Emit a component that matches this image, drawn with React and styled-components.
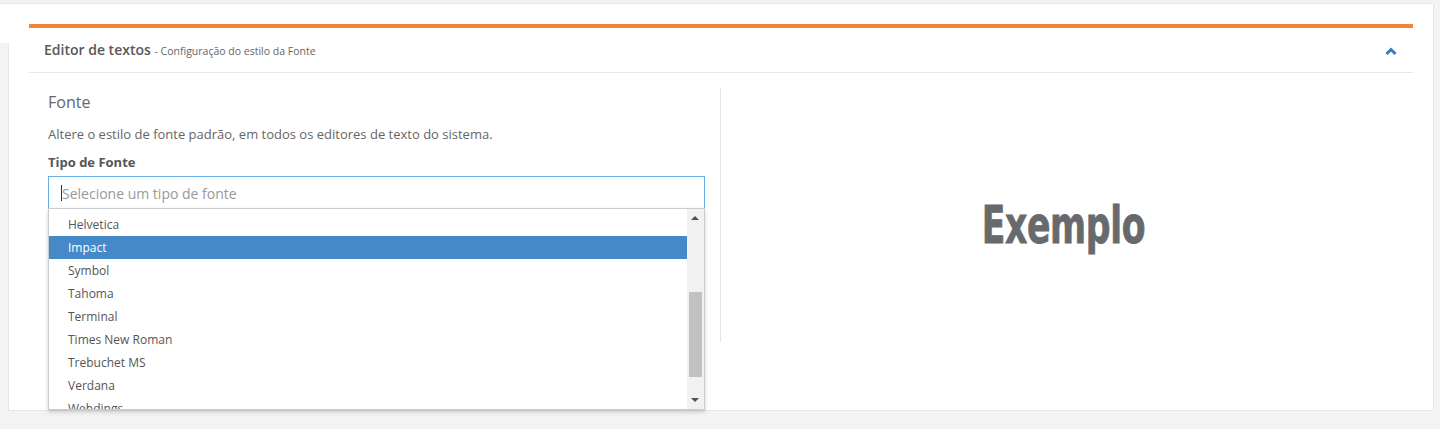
import React from 'react';
import styled, { createGlobalStyle } from 'styled-components';

const Global = createGlobalStyle`
  html, body { margin: 0; padding: 0; background: #f3f3f3; }
  body {
    font-family: "Open Sans", "Liberation Sans", sans-serif;
    width: 1440px; height: 429px; overflow: hidden;
    -webkit-font-smoothing: antialiased;
  }
  * { box-sizing: border-box; }
`;

const Page = styled.div`
  padding: 3px 0 0 8px;
`;

const Card = styled.div`
  position: relative;
  width: 1426px;
  height: 408px;
  background: #fff;
  border: 1px solid #e6e6e6;
  padding: 20px 0 0 20px;
  &::before {
    content: "";
    position: absolute;
    left: -9px;
    top: -1px;
    width: 9px;
    height: 39px;
    background: #fff;
    border-top: 1px solid #e6e6e6;
  }
`;

const Panel = styled.section`
  width: 1384px;
  border-top: 4px solid #f48432;
`;

const PanelHeader = styled.header`
  height: 45px;
  border-bottom: 1px solid #e6e6e6;
  padding: 0 16px 0 15px;
  display: flex;
  align-items: center;
  justify-content: space-between;
`;

const HeaderTitle = styled.h3`
  margin: 0;
  font-size: 14px;
  line-height: 20px;
  font-weight: 600;
  color: #585858;
`;

const HeaderSub = styled.small`
  font-size: 10.5px;
  font-weight: 400;
  color: #666;
`;

const Chevron = styled.svg`
  width: 12px;
  height: 9px;
  display: block;
  margin-top: 3px;
`;

const PanelBody = styled.div`
  display: grid;
  grid-template-columns: 692px 1fr;
  padding-top: 15px;
`;

const LeftCol = styled.div`
  height: 254px;
  border-right: 1px solid #e6e6e6;
  padding: 3px 15px 0 19px;
`;

const RightCol = styled.div`
  display: flex;
  align-items: center;
  justify-content: center;
  padding: 19px 8px 0 0;
`;

const SectionTitle = styled.h4`
  margin: 0;
  font-size: 16px;
  line-height: 22px;
  font-weight: 400;
  color: #666;
`;

const Description = styled.p`
  margin: 12px 0 0;
  font-size: 13px;
  line-height: 18px;
  color: #666;
`;

const Label = styled.label`
  display: block;
  margin-top: 10px;
  font-size: 13px;
  line-height: 18px;
  font-weight: 700;
  color: #555;
`;

const Field = styled.div`
  position: relative;
  margin-top: 5px;
`;

const FakeInput = styled.div`
  height: 33px;
  border: 1px solid #66afe9;
  padding: 1px 12px 0;
  display: flex;
  align-items: center;
  font-size: 14px;
  color: #999;
`;

const Caret = styled.span`
  display: inline-block;
  width: 1px;
  height: 16px;
  background: #333;
`;

const Dropdown = styled.div`
  position: absolute;
  left: 0;
  top: 32px;
  width: 100%;
  height: 202px;
  background: #fff;
  border: 1px solid #c8cbd0;
  box-shadow: 0 2px 4px rgba(0, 0, 0, 0.18);
  display: flex;
  z-index: 5;
`;

const Options = styled.ul`
  list-style: none;
  margin: 0;
  padding: 4px 0 0;
  flex: 1;
  overflow: hidden;
`;

const Option = styled.li`
  height: 23px;
  line-height: 23px;
  padding-left: 19px;
  font-size: 12px;
  color: ${p => (p.$active ? '#fff' : '#555')};
  background: ${p => (p.$active ? '#4589c9' : 'transparent')};
`;

const Scrollbar = styled.div`
  position: relative;
  width: 17px;
  background: #f1f1f1;
`;

const Arrow = styled.span`
  position: absolute;
  left: 4px;
  width: 0;
  height: 0;
  border-left: 4px solid transparent;
  border-right: 4px solid transparent;
  ${p => (p.$down
    ? 'bottom: 7px; border-top: 4px solid #505050;'
    : 'top: 7px; border-bottom: 4px solid #505050;')}
`;

const Thumb = styled.span`
  position: absolute;
  left: 2px;
  right: 2px;
  top: 83px;
  height: 85px;
  background: #c1c1c1;
`;

const Sample = styled.div`
  font-family: "DejaVu Sans Condensed", "Liberation Sans", sans-serif;
  font-weight: 700;
  font-size: 52px;
  line-height: 60px;
  color: #676a6d;
  -webkit-text-stroke: 0.8px #676a6d;
  transform: scaleX(0.74);
  letter-spacing: -0.5px;
`;

const fonts = ['Helvetica', 'Impact', 'Symbol', 'Tahoma', 'Terminal', 'Times New Roman', 'Trebuchet MS', 'Verdana', 'Webdings'];

export default function App() {
  return (
    <>
      <Global />
      <Page>
        <Card>
          <Panel>
            <PanelHeader>
              <HeaderTitle>
                Editor de textos <HeaderSub>- Configuração do estilo da Fonte</HeaderSub>
              </HeaderTitle>
              <Chevron viewBox="0 0 12 9">
                <polyline points="1.5,7 6,2.5 10.5,7" fill="none" stroke="#3a7cc0" strokeWidth="3" strokeLinejoin="miter" />
              </Chevron>
            </PanelHeader>
            <PanelBody>
              <LeftCol>
                <SectionTitle>Fonte</SectionTitle>
                <Description>Altere o estilo de fonte padrão, em todos os editores de texto do sistema.</Description>
                <Label>Tipo de Fonte</Label>
                <Field>
                  <FakeInput><Caret />Selecione um tipo de fonte</FakeInput>
                  <Dropdown>
                    <Options>
                      {fonts.map(f => (
                        <Option key={f} $active={f === 'Impact'}>{f}</Option>
                      ))}
                    </Options>
                    <Scrollbar>
                      <Arrow />
                      <Thumb />
                      <Arrow $down />
                    </Scrollbar>
                  </Dropdown>
                </Field>
              </LeftCol>
              <RightCol>
                <Sample>Exemplo</Sample>
              </RightCol>
            </PanelBody>
          </Panel>
        </Card>
      </Page>
    </>
  );
}
